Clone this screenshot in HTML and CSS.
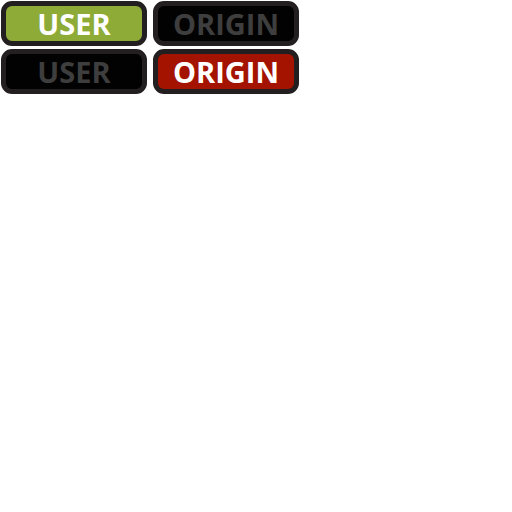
FILE: index.html
```html
<!DOCTYPE html>
<html>
<head>
<meta charset="utf-8">
<link rel="stylesheet" href="styles.css">
</head>
<body>
<div class="grid">
  <div class="btn on"><span>USER</span></div>
  <div class="btn off"><span>ORIGIN</span></div>
  <div class="btn off"><span>USER</span></div>
  <div class="btn on-red"><span>ORIGIN</span></div>
</div>
</body>
</html>
```
FILE: styles.css
```css
html, body {
  margin: 0;
  padding: 0;
  background: #ffffff;
}
.grid {
  display: grid;
  grid-template-columns: 146px 146px;
  grid-auto-rows: 45px;
  column-gap: 6px;
  row-gap: 3px;
  padding: 1px 0 0 1px;
}
.btn {
  box-sizing: border-box;
  border: 5px solid #231f20;
  border-radius: 11px;
  display: flex;
  align-items: center;
  justify-content: center;
  font-family: "Open Sans", sans-serif;
  font-weight: 700;
  font-size: 29px;
  line-height: 1;
}
.on {
  background: #8eab37;
  color: #ffffff;
}
.off {
  background: #020202;
  color: #3e3e3e;
}
.on-red {
  background: #a41300;
  color: #ffffff;
}
```
